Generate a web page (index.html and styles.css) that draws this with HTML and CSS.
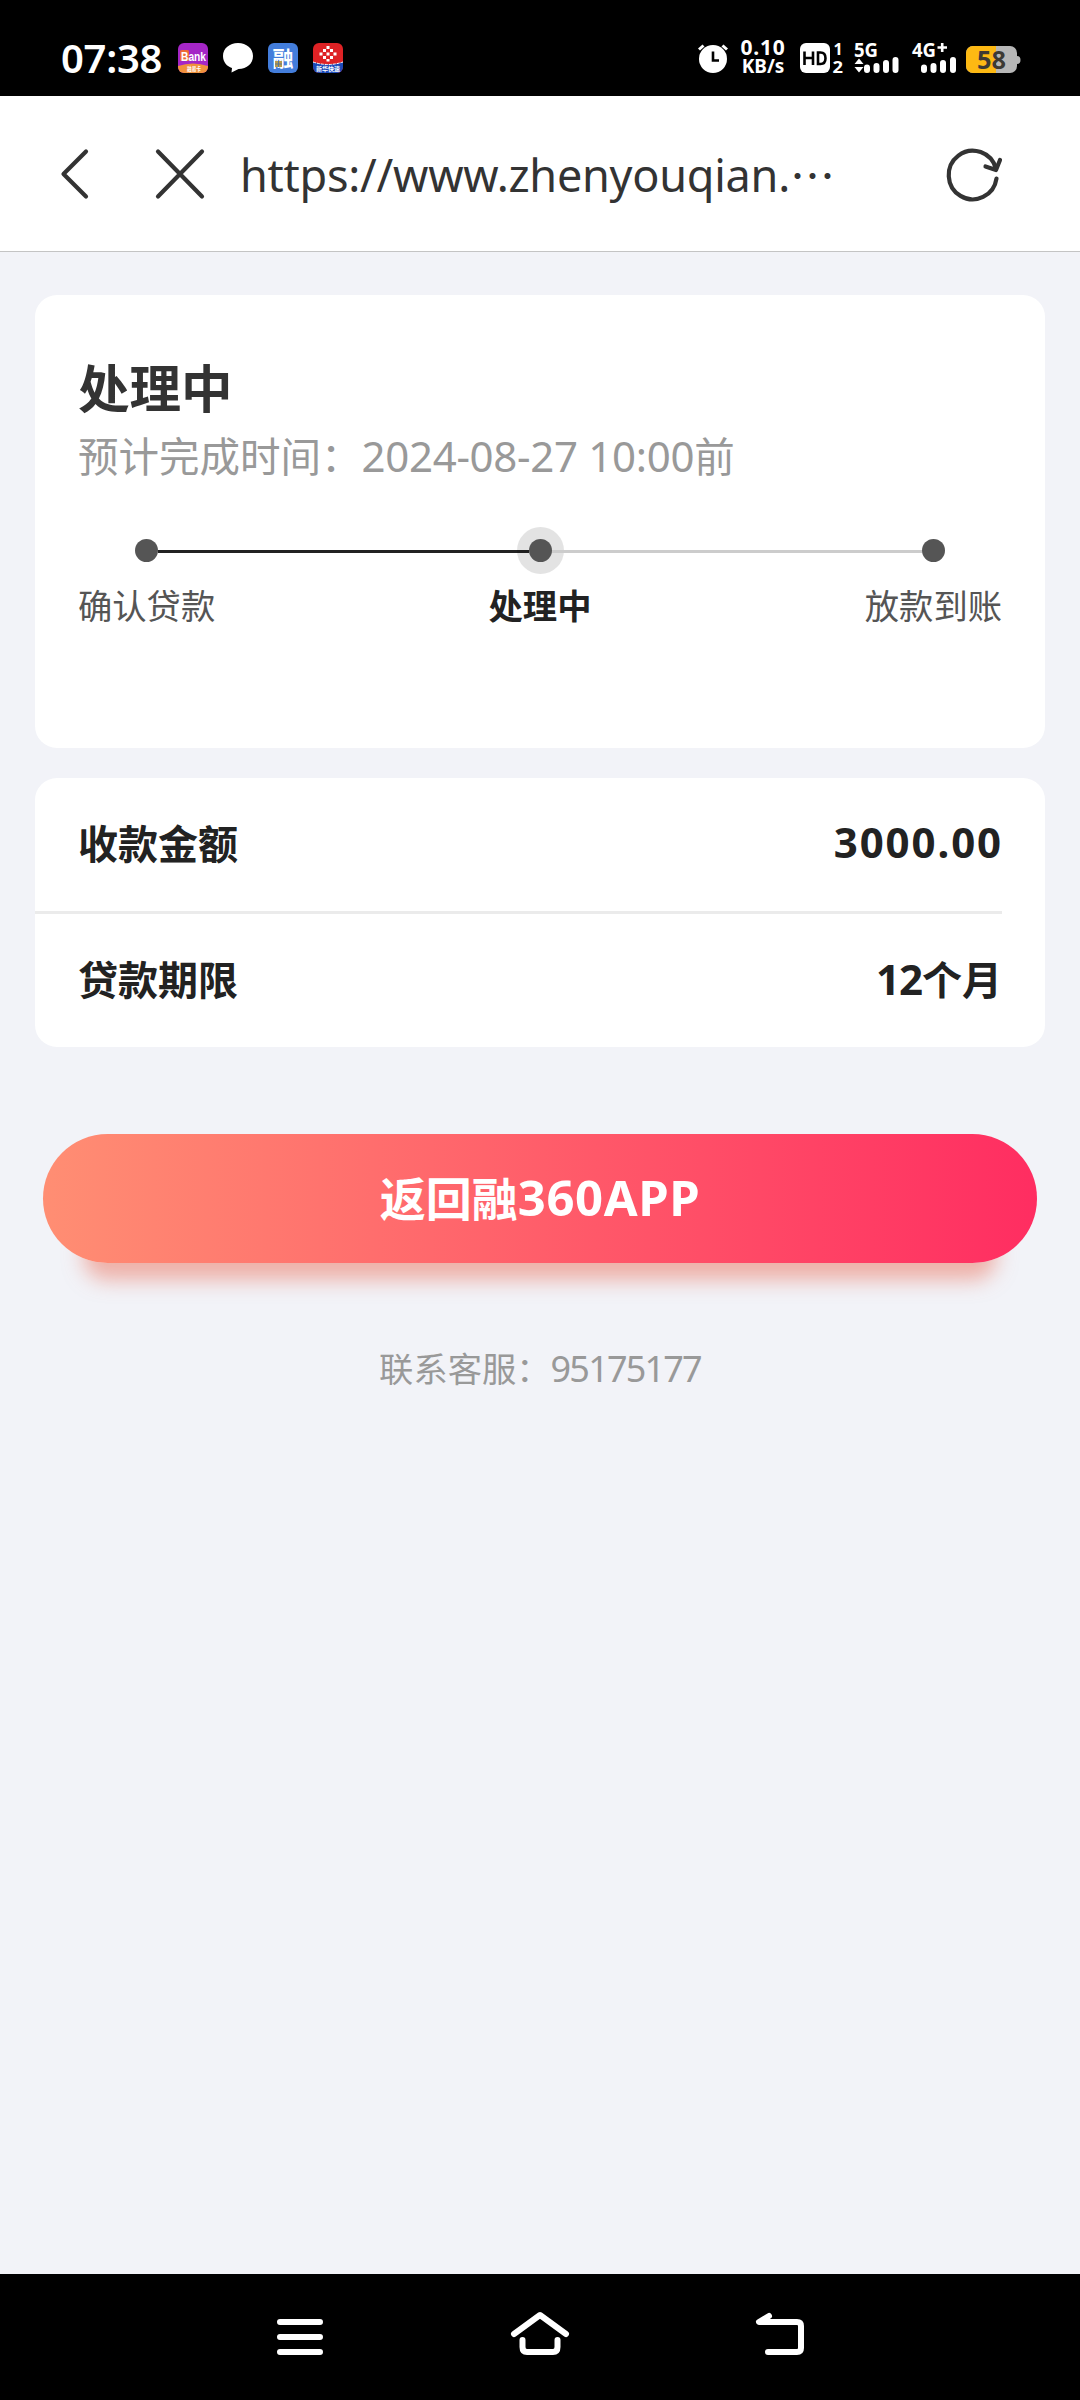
FILE: index.html
```html
<!DOCTYPE html>
<html lang="zh-CN">
<head>
<meta charset="utf-8">
<title>处理中</title>
<link rel="stylesheet" href="styles.css">
</head>
<body>
<div class="screen">
  <div class="status">
    <div class="status-left">
      <span class="clock">07:38</span>
      <svg class="app" viewBox="0 0 30 30">
        <defs><clipPath id="round"><rect width="30" height="30" rx="6"/></clipPath></defs>
        <g clip-path="url(#round)">
          <rect width="30" height="30" fill="#a526c6"/>
          <path d="M0 23Q15 18 30 23V30H0z" fill="#f0913c"/>
          <rect x="2" y="7" width="9" height="11" rx="1.5" fill="#ee6a35"/>
        </g>
        <text x="3" y="18" class="t-bank" textLength="25" lengthAdjust="spacingAndGlyphs">Bank</text>
        <text x="9" y="28" class="t-tiny" textLength="14" lengthAdjust="spacingAndGlyphs">融易卡</text>
      </svg>
      <svg class="app" viewBox="0 0 30 30"><path d="M15 0C6.500 0 0 5.500 0 13C0 19 4 23.500 9 25L8.500 29.500L15.500 26C24 26 30 20.500 30 13C30 5.500 23.500 0 15 0z" fill="#fff"/></svg>
      <svg class="app" viewBox="0 0 30 30"><rect width="30" height="30" rx="6" fill="#437ddb"/><text x="4.500" y="23" class="t-rong">融</text><rect x="7" y="18" width="7" height="6" fill="#b79a4c"/><path d="M7 21h7M10.500 18v6" stroke="#5c7693"/></svg>
      <svg class="app" viewBox="0 0 30 30">
        <g clip-path="url(#round)"><rect width="30" height="30" fill="#de2225"/><path d="M0 19Q15 24 30 19V30H0z" fill="#1b49b8"/><path d="M0 19Q15 24 30 19" fill="none" stroke="#fff" stroke-dasharray="3 1"/></g>
        <path d="M13.500 3h3v3h-3zM10 6h3v3h-3zM17 6h3v3h-3zM6.500 9.500h3v3h-3zM13.500 9.500h3v3h-3zM20.500 9.500h3v3h-3zM10 13h3v3h-3zM17 13h3v3h-3zM13.500 16h3v2.500h-3z" fill="#fff"/>
        <text x="3" y="28" class="t-tiny">新华快速</text>
      </svg>
    </div>
    <div class="status-right">
      <svg width="32" height="32" viewBox="0 0 32 32"><circle cx="16" cy="17" r="14" fill="#fff"/><path d="M2 7.500L6.500 3.500M30 7.500L25.500 3.500" stroke="#fff" stroke-width="3"/><path d="M16 9.500V18.500H22" fill="none" stroke="#000" stroke-width="2.600"/></svg>
      <div class="rate"><span class="rate-n">0.10</span><span class="rate-u">KB/s</span></div>
      <svg width="44" height="32" viewBox="0 0 44 32"><rect y="1" width="30" height="30" rx="6" fill="#fff"/><path d="M4.500 9.500V23M13 9.500V23M4.500 16H13M18 10.500H20.500Q25.500 10.500 25.500 16.200T20.500 22H18z" fill="none" stroke="#000" stroke-width="2.600"/><text x="33.500" y="13" class="t-sim">1</text><text x="32.500" y="31" class="t-sim" textLength="10.500" lengthAdjust="spacingAndGlyphs">2</text></svg>
      <svg width="45" height="32" viewBox="0 0 45 32"><text x="0" y="15" class="t-net" textLength="24" lengthAdjust="spacingAndGlyphs">5G</text><path d="M.5 22L5 16.500L9.500 22zM.5 25L5 30.500L9.500 25z" fill="#fff"/><path d="M13 25.500V28M22.500 24V28M32 21V28M41.500 18V28" stroke="#fff" stroke-width="6" stroke-linecap="round"/></svg>
      <svg width="45" height="32" viewBox="0 0 45 32"><text x="0" y="15" class="t-net" textLength="24" lengthAdjust="spacingAndGlyphs">4G</text><path d="M25.500 5.500H35M30.200 1V10" stroke="#fff" stroke-width="2.600"/><path d="M12 25.500V28M21.500 24V28M31 21V28M41 18V28" stroke="#fff" stroke-width="6" stroke-linecap="round"/></svg>
      <svg width="55" height="32" viewBox="0 0 55 32"><defs><clipPath id="cell"><rect y="4" width="51" height="27" rx="7"/></clipPath></defs><g clip-path="url(#cell)"><rect width="55" height="32" fill="#b7b7b7"/><rect width="30" height="32" fill="#fdb913"/></g><path d="M51 14Q54.500 14 54.500 18T51 22z" fill="#b7b7b7"/><text x="11" y="27" class="t-bat" textLength="29" lengthAdjust="spacingAndGlyphs">58</text></svg>
    </div>
  </div>

  <header class="bar">
    <svg width="30" height="54" viewBox="0 0 30 54"><path d="M26 4.500L3.500 27L26 49.500" class="ico"/></svg>
    <svg class="close" width="52" height="54" viewBox="0 0 52 54"><path d="M4 4.500L48 49.500M48 4.500L4 49.500" class="ico"/></svg>
    <div class="url"><span class="url-text">https://www.zhenyouqian.</span><span class="dots">…</span></div>
    <svg class="reload" width="60" height="60" viewBox="0 0 60 60"><path d="M53.500 34.500A24 24.300 0 1 1 53 25M42.500 22.500L53 26L57 16" class="ico"/></svg>
  </header>

  <main class="page">
    <section class="card progress">
      <h1 class="title">处理中</h1>
      <p class="eta">预计完成时间：<span class="eta-num">2024-08-27 10:00</span>前</p>
      <div class="track">
        <span class="dot"></span><span class="line done"></span><span class="dot current"></span><span class="line"></span><span class="dot"></span>
      </div>
      <div class="labels"><span>确认贷款</span><span class="now">处理中</span><span>放款到账</span></div>
    </section>

    <section class="card details">
      <div class="row"><span>收款金额</span><span class="amount">3000.00</span></div>
      <div class="divider"></div>
      <div class="row"><span>贷款期限</span><span><span class="num">12</span>个月</span></div>
    </section>

    <button class="cta">返回融<span class="cta-num">360APP</span></button>
    <p class="contact">联系客服：<span class="contact-num">95175177</span></p>
  </main>

  <nav class="nav">
    <svg width="60" height="60" viewBox="0 0 60 60"><path d="M10 15H50M10 30H50M10 45H50" class="navico"/></svg>
    <svg width="60" height="60" viewBox="0 0 60 60"><path d="M4 27L30 8L56 27M12.500 33V40Q12.500 45 17 45H43Q47.500 45 47.500 40V33" class="navico"/></svg>
    <svg width="60" height="60" viewBox="0 0 60 60"><path d="M29 9L19 15H57Q61 15 61 19V41Q61 45 57 45H28" transform="translate(-10 0)" class="navico"/></svg>
  </nav>
</div>
</body>
</html>
```
FILE: styles.css
```css
* { box-sizing: border-box; }
body { margin: 0; font-family: "Noto Sans CJK SC", sans-serif; background: #f2f3f8; }
h1, p { margin: 0; }
svg { display: block; flex: none; overflow: visible; }
.screen { width: 1080px; height: 2400px; display: flex; flex-direction: column; background: #f2f3f8; }

.status { height: 96px; flex: none; padding: 19px 59px 0 61px; background: #000; color: #fff; display: flex; justify-content: space-between; align-items: center; font-family: "Noto Sans", sans-serif; }
.status-left, .status-right { display: flex; align-items: center; }
.clock { width: 117px; font-size: 40px; line-height: 40px; font-weight: 600; letter-spacing: -0.3px; }
.app { width: 30px; height: 30px; margin-right: 15px; }
.rate { width: 46px; margin: 0 14px 0 11px; display: flex; flex-direction: column; align-items: center; font-weight: 700; }
.rate-n { font-size: 21px; line-height: 17px; letter-spacing: 0.8px; }
.rate-u { font-size: 19px; line-height: 20px; }
.status-right svg + svg { margin-left: 10px; }
.status-right svg:nth-of-type(4) { margin-left: 13px; }
.status-right svg:nth-of-type(5) { margin-left: 9px; }
.t-bank { font: 600 13px "Liberation Sans", sans-serif; fill: #fff; }
.t-tiny { font: 700 6px "Noto Sans CJK SC", sans-serif; fill: #fff; }
.t-rong { font: 700 21px "Noto Sans CJK SC", sans-serif; fill: #fff; }
.t-sim { font: 700 16px "Noto Sans", sans-serif; fill: #fff; }
.t-net { font: 700 20px "Noto Sans", sans-serif; fill: #fff; }
.t-bat { font: 700 25px "Noto Sans", sans-serif; fill: #3d3a33; }

.bar { height: 156px; flex: none; padding-left: 60px; background: #fff; border-bottom: 1px solid #c4c4c4; display: flex; align-items: center; }
.ico { fill: none; stroke: #333; stroke-width: 4.2; stroke-linecap: round; stroke-linejoin: round; }
.close { margin-left: 64px; }
.url { margin-left: 34px; width: 703px; padding-top: 3px; display: flex; align-items: center; color: #333; font-size: 45px; line-height: 60px; white-space: nowrap; }
.url-text { font-family: "Noto Sans", sans-serif; letter-spacing: -0.25px; }

.page { flex: 1; padding: 43px 35px 0; display: flex; flex-direction: column; }
.card { background: #fff; border-radius: 22px; }
.progress { height: 453px; padding: 59px 43px 0; }
.title { font-size: 51.500px; line-height: 64px; font-weight: 700; color: #333; }
.eta { margin-top: 7px; font-size: 40.500px; line-height: 60px; height: 60px; color: #999; white-space: nowrap; }
.eta-num { font-family: "Noto Sans", sans-serif; font-size: 42px; letter-spacing: -0.3px; }
.track { margin: 42px 57px 0 57px; height: 46px; display: flex; align-items: center; }
.dot { width: 23px; height: 23px; flex: none; border-radius: 50%; background: #555; }
.current { box-shadow: 0 0 0 12px rgba(0, 0, 0, .11); }
.line { flex: 1; height: 3px; background: #ccc; margin-top: 3px; }
.done { background: #222; }
.labels { margin-top: 7px; display: grid; grid-template-columns: 1fr 1fr 1fr; font-size: 34.300px; line-height: 48px; color: #555; }
.labels span:nth-child(2) { text-align: center; }
.labels span:nth-child(3) { text-align: right; }
.labels .now { font-weight: 700; color: #222; }

.details { margin-top: 30px; height: 269px; color: #222; font-weight: 700; font-size: 40px; }
.row { height: 133px; padding: 0 43px 5px; display: flex; justify-content: space-between; align-items: center; }
.divider { height: 3px; margin-right: 43px; background: #ebebeb; }
.amount, .num { font-family: "Noto Sans", sans-serif; font-size: 42px; line-height: 50px; }
.amount { letter-spacing: 1.9px; margin-right: -1px; }
.num { letter-spacing: -1px; }

.cta { margin: 87px 8px 0; height: 129px; flex: none; border: 0; padding: 0 0 5px; border-radius: 65px; color: #fff; font: 700 46px/60px "Noto Sans CJK SC", sans-serif; background: linear-gradient(90deg, #ff8e73, #ff2d61); box-shadow: 0 57px 20px -40px rgba(236, 112, 90, .5); }
.cta-num { font-family: "Noto Sans", sans-serif; font-size: 49px; letter-spacing: 0.6px; }
.contact { margin-top: 78px; text-align: center; font-size: 34.300px; line-height: 52px; color: #999; }
.contact-num { font-family: "Noto Sans", sans-serif; font-size: 36px; letter-spacing: -1.8px; }

.nav { height: 126px; flex: none; background: #000; display: flex; justify-content: center; align-items: center; gap: 180px; }
.navico { fill: none; stroke: #fff; stroke-width: 6; stroke-linecap: round; stroke-linejoin: round; }
```
